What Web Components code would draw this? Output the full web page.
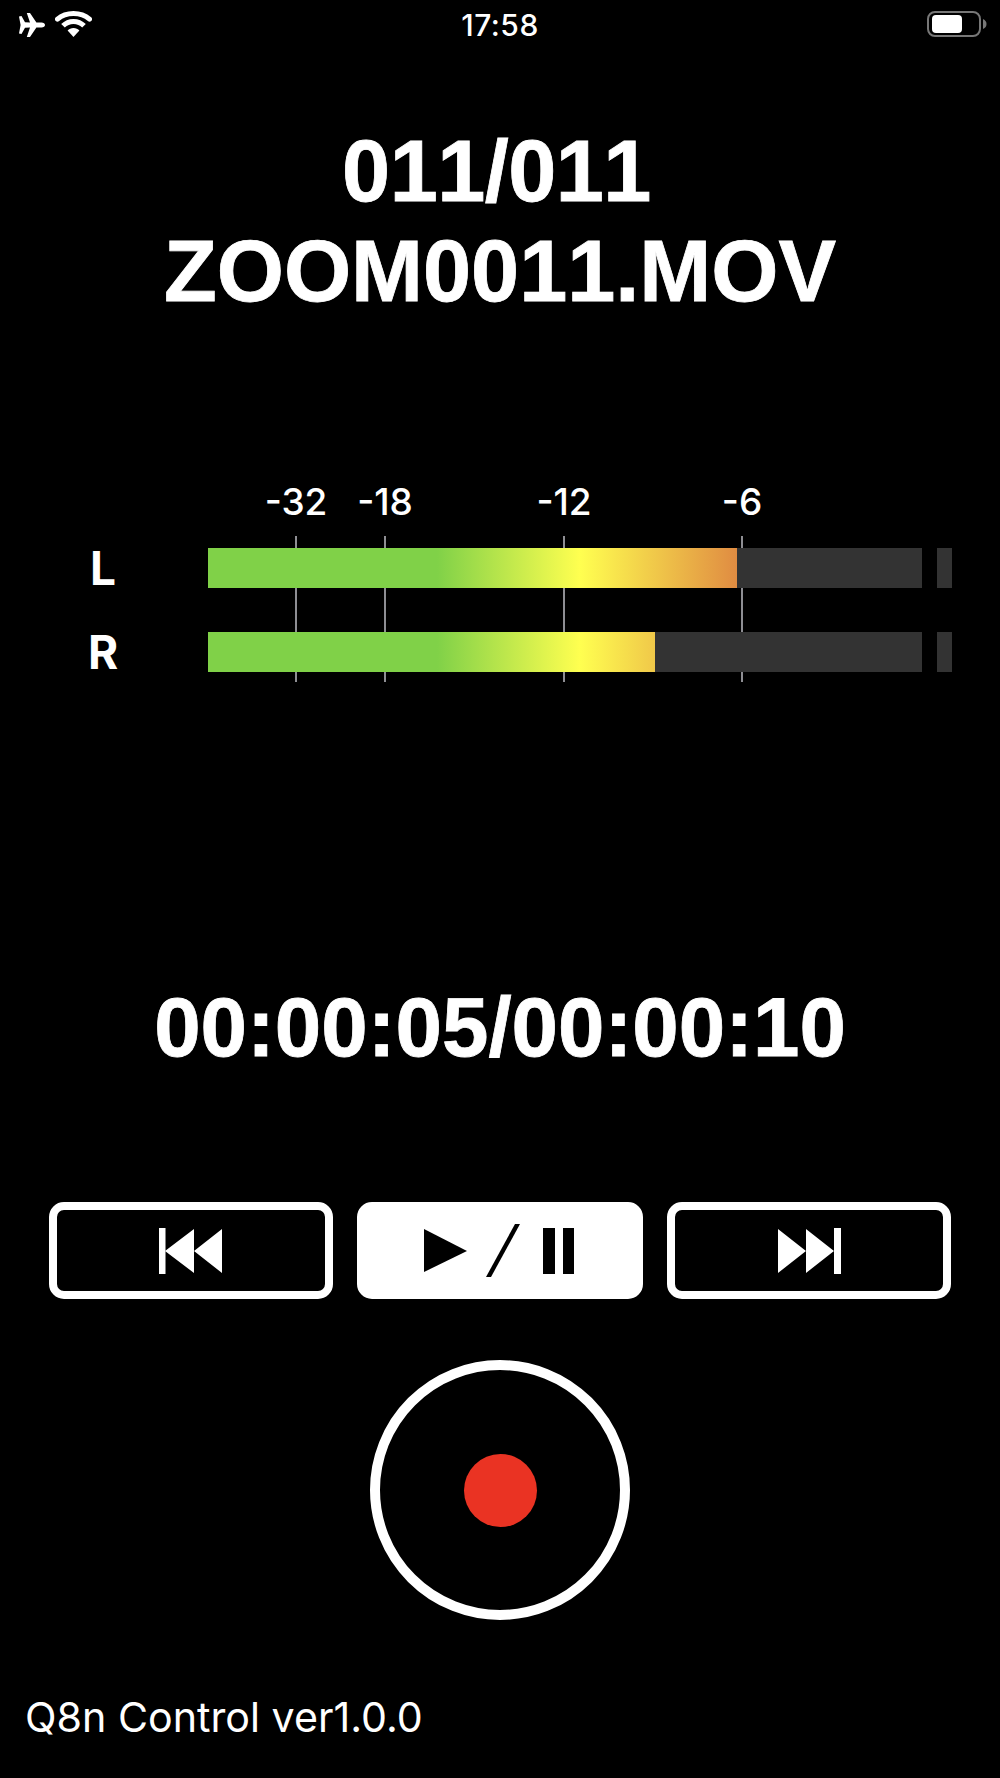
<!DOCTYPE html>
<html lang="en">
<head>
<meta charset="utf-8">
<title>Q8n Control</title>
<style>
  html, body { margin: 0; background: #000; }
  body { width: 1000px; height: 1778px; overflow: hidden; color: #fff; font-family: "Liberation Sans", Arial, sans-serif; }
</style>
</head>
<body>
<q8n-app></q8n-app>
<script>
function define(name, html, onConnect) {
  const template = document.createElement('template');
  template.innerHTML = html;
  customElements.define(name, class extends HTMLElement {
    constructor() {
      super();
      this.attachShadow({ mode: 'open' }).appendChild(template.content.cloneNode(true));
    }
    connectedCallback() {
      if (onConnect) onConnect.call(this);
    }
  });
}

define('status-bar', `
<style>
  :host { display: grid; grid-template-columns: 1fr auto 1fr; align-items: start; height: 48px; font-family: Inter, sans-serif; }
  .left, .right { display: flex; height: 48px; }
  .left { padding-left: 19px; gap: 10px; align-items: flex-start; }
  .right { justify-content: flex-end; padding-right: 13px; }
  .time { font-size: 30px; font-weight: 500; line-height: 30px; padding-top: 10px; letter-spacing: .5px; }
  svg { display: block; margin-top: 11px; }
  .plane { margin-top: 13px; }
</style>
<div class="left">
  <svg class="plane" width="26" height="24" viewBox="0 0 26 24">
    <path fill="#fff" d="M0 3.5 2.5 3 6 9.2 11 9.4 7.8 0H11L17.4 9.5H22.5C24.6 9.6 26 10.7 26 12S24.6 14.4 22.5 14.5H17.4L11 24H7.8L11 14.6 6 14.8 2.5 21 0 20.5 1.6 12Z"/>
  </svg>
  <svg width="37" height="26" viewBox="0 0 37 26">
    <path fill="#fff" d="M18.5 26 12.6 19.6C14 18 16.1 17 18.5 17S23 18 24.4 19.6Z"/>
    <path fill="none" stroke="#fff" stroke-width="5" d="M8 14.8C10.7 12 14.4 10.4 18.5 10.4S26.3 12 29 14.8"/>
    <path fill="none" stroke="#fff" stroke-width="5" stroke-linecap="round" d="M2.5 8.2C6.6 4.6 12.2 2.5 18.5 2.5S30.4 4.6 34.5 8.2"/>
  </svg>
</div>
<div class="time">17:58</div>
<div class="right">
  <svg width="60" height="26" viewBox="0 0 60 26">
    <rect x="1" y="1" width="52" height="24" rx="7" fill="none" stroke="#777" stroke-width="2"/>
    <rect x="5" y="4" width="30" height="18" rx="4" fill="#fff"/>
    <path fill="#777" d="M56 8C58.5 9 59.5 11 59.5 13S58.5 17 56 18Z"/>
  </svg>
</div>
`);

define('big-title', `
<style>
  :host { display: block; text-align: center; font-weight: 700; color: #fff; font-kerning: none; -webkit-text-stroke: .8px #fff; }
  :host([kind="title"]) { font-size: 86.4px; line-height: 100px; padding-top: 73px; }
  :host([kind="clock"]) { font-size: 83.5px; line-height: 100px; }
</style>
<slot></slot>
`);

// one row: channel letter, coloured fill on the dark track and the short peak block
define('level-bar', `
<style>
  :host { display: flex; height: 40px; align-items: center; }
  .ch { width: 206px; margin-right: 2px; text-align: center; font: 700 46px/40px Inter, sans-serif; }
  .track { width: 714px; height: 40px; background: #333; }
  .fill {
    height: 100%;
    background: linear-gradient(90deg, #80d148 0, #80d148 229px, #ffff50 372px, #e08c42 529px) no-repeat;
    background-size: 714px 100%;
  }
  .peak { width: 15px; height: 40px; margin-left: 15px; background: #333; }
</style>
<div class="ch"><slot></slot></div>
<div class="track"><div class="fill"></div></div>
<div class="peak"></div>
`, function () {
  this.shadowRoot.querySelector('.fill').style.width = this.getAttribute('level') + 'px';
});

define('level-meter', `
<style>
  :host { display: block; position: relative; height: 202px; }
  .scale, .ticks {
    display: grid;
    grid-template-columns: 89px 179px 178px 1fr;
    margin-left: 296px;
  }
  .scale { box-sizing: border-box; height: 58px; padding-top: 4px; font: 500 37px/36px Inter, sans-serif; }
  .scale div { width: 0; display: flex; justify-content: center; white-space: nowrap; }
  .ticks { position: absolute; top: 56px; left: 0; right: 0; height: 146px; }
  .ticks div { border-left: 2px solid #8e8e93; margin-left: -1px; }
  .rows { position: relative; display: flex; flex-direction: column; gap: 44px; padding-top: 10px; }
</style>
<div class="scale"><div>-32</div><div>-18</div><div>-12</div><div>-6</div></div>
<div class="ticks"><div></div><div></div><div></div><div></div></div>
<div class="rows">
  <level-bar level="529">L</level-bar>
  <level-bar level="447">R</level-bar>
</div>
`);

define('transport-button', `
<style>
  :host {
    display: flex; align-items: center; justify-content: center;
    box-sizing: border-box; height: 97px;
    border: 8px solid #fff; border-radius: 15px;
    background: #000;
  }
  :host([active]) { background: #fff; }
  ::slotted(svg) { display: block; }
</style>
<slot></slot>
`);

define('record-button', `
<style>
  :host {
    display: flex; align-items: center; justify-content: center;
    box-sizing: border-box; width: 260px; height: 260px;
    border: 10px solid #fff; border-radius: 50%;
  }
  .dot { width: 73px; height: 73px; border-radius: 50%; background: #ea3323; }
</style>
<div class="dot"></div>
`);

define('q8n-app', `
<style>
  :host { display: block; width: 1000px; height: 1778px; }
  .meter { margin-top: 159px; }
  .clock { margin-top: 295px; }
  .track-no { letter-spacing: -.5px; padding-right: 7px; }
  .transport {
    display: grid;
    grid-template-columns: 284px 286px 284px;
    gap: 24px;
    padding: 0 49px;
    margin-top: 125px;
  }
  .record { display: flex; justify-content: center; margin-top: 61px; }
  .foot { margin: 73px 0 0 25px; font: 400 41.2px/48px Inter, sans-serif; white-space: nowrap; }
  .nudge { margin-left: -2px; }
</style>
<status-bar></status-bar>
<big-title kind="title"><span class="track-no">011/011</span><br>ZOOM0011.MOV</big-title>
<level-meter class="meter"></level-meter>
<big-title kind="clock" class="clock">00:00:05/00:00:10</big-title>
<div class="transport">
  <transport-button>
    <svg class="nudge" width="63" height="46" viewBox="0 0 63 46">
      <rect x="0" y="0" width="6.5" height="46" fill="#fff"/>
      <path fill="#fff" d="M6 23 35 1V23L63 1V45L35 23V45Z"/>
    </svg>
  </transport-button>
  <transport-button active>
    <svg class="nudge" width="150" height="53" viewBox="0 0 150 53">
      <path d="M0 5 43 27 0 48Z" fill="#000"/>
      <path d="M62 53 91 0H96L67 53Z" fill="#000"/>
      <rect x="119" y="4" width="12" height="46" fill="#000"/>
      <rect x="139" y="4" width="11" height="46" fill="#000"/>
    </svg>
  </transport-button>
  <transport-button>
    <svg width="63" height="46" viewBox="0 0 63 46">
      <path fill="#fff" d="M0 1 28 23V1L56 23V0H63V46H56V23L28 45V23L0 45Z"/>
    </svg>
  </transport-button>
</div>
<div class="record"><record-button></record-button></div>
<div class="foot">Q8n Control ver1.0.0</div>
`);
</script>
</body>
</html>
